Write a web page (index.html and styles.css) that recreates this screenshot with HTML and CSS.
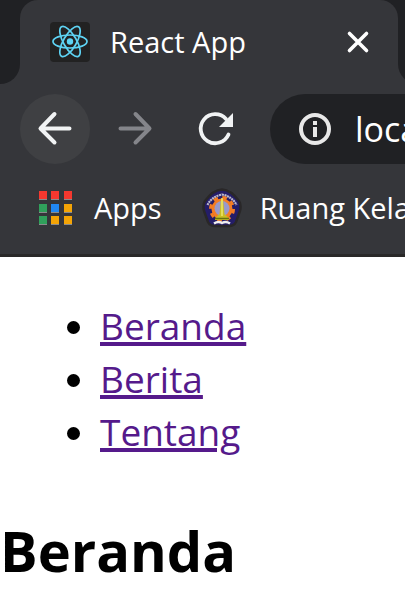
FILE: index.html
```html
<!DOCTYPE html>
<html lang="id">
<head>
<meta charset="utf-8">
<title>React App</title>
<link rel="stylesheet" href="styles.css">
</head>
<body>
<header class="browser">
  <div class="tab-strip">
    <div class="strip-start"></div>
    <div class="tab-slot">
      <div class="tab">
        <svg class="favicon" viewBox="0 0 40 40" aria-hidden="true">
          <rect width="40" height="40" rx="4" fill="#222"/>
          <g fill="none" stroke="#5ed3f3" stroke-width="1.700">
            <ellipse cx="20" cy="19.500" rx="17" ry="6.500"/>
            <ellipse cx="20" cy="19.500" rx="17" ry="6.500" transform="rotate(60 20 19.500)"/>
            <ellipse cx="20" cy="19.500" rx="17" ry="6.500" transform="rotate(120 20 19.500)"/>
          </g>
          <circle cx="20" cy="19.500" r="3.200" fill="#5ed3f3"/>
        </svg>
        <span class="tab-title">React App</span>
        <button class="tab-close" aria-label="Close tab">
          <svg viewBox="0 0 24 24"><path d="M3.500 3.500 20.500 20.500M20.500 3.500 3.500 20.500" fill="none" stroke="#fff" stroke-width="3.600" stroke-linecap="round"/></svg>
        </button>
      </div>
    </div>
    <div class="strip-end"></div>
  </div>
  <div class="toolbar">
    <button class="nav-button active" aria-label="Back">
      <svg viewBox="0 0 40 40"><path d="M34.500 19.500H6M19.500 5 5.500 19.500 19.500 33.500" fill="none" stroke="#f1f3f4" stroke-width="4" stroke-linecap="round" stroke-linejoin="round"/></svg>
    </button>
    <button class="nav-button" aria-label="Forward" disabled>
      <svg viewBox="0 0 40 40"><path d="M5.500 19.500H34M20.500 5 34.500 19.500 20.500 33.500" fill="none" stroke="#84858a" stroke-width="4" stroke-linecap="round" stroke-linejoin="round"/></svg>
    </button>
    <button class="nav-button" aria-label="Reload">
      <svg viewBox="0 0 40 40"><path d="M33.500 25.500A14.500 14.500 0 1 1 31 10" fill="none" stroke="#f1f3f4" stroke-width="3.800" stroke-linecap="round"/><path d="M38 4V18H24Z" fill="#f1f3f4"/></svg>
    </button>
    <label class="address">
      <svg class="info" viewBox="0 0 32 32" aria-hidden="true"><circle cx="16" cy="16" r="14" fill="none" stroke="#e8e8e8" stroke-width="4"/><path d="M14 8h4v4h-4zM14 14h4v10h-4z" fill="#e8e8e8"/></svg>
      <input class="address-input" type="text" value="localhost:3000" aria-label="Address">
    </label>
  </div>
  <nav class="bookmarks">
    <a class="bookmark" href="#apps">
      <svg class="apps-icon" viewBox="0 0 34 34" aria-hidden="true">
        <path d="M1 0h8v9H1zM13 0h8v9h-8zM26 0h8v9h-8zM1 13h8v9H1zM13 13h8v9h-8zM26 13h8v9h-8zM1 25h8v9H1zM13 25h8v9h-8zM26 25h8v9h-8z" fill="#8a8b8d"/>
        <path d="M1 0h8v8H1zM13 0h8v8h-8zM26 0h8v8h-8z" fill="#f5382f"/>
        <path d="M1 13h8v8H1zM1 25h8v8H1z" fill="#30a05b"/>
        <path d="M13 13h8v8h-8z" fill="#2188f3"/>
        <path d="M26 13h8v8h-8zM13 25h8v8h-8zM26 25h8v8h-8z" fill="#f4a406"/>
      </svg>
      <span>Apps</span>
    </a>
    <a class="bookmark" href="#ruang-kelas">
      <svg class="crest" viewBox="0 0 40 40" aria-hidden="true">
        <path d="M20 1.500Q29 2 37 13Q39.500 17 38 23L34 34Q32 38 27 38H13Q8 38 6 34L2 23Q.5 17 3 13Q11 2 20 1.500Z" fill="#241d68" stroke="#292728" stroke-width="2.500"/>
        <path d="M5.500 17Q9 9 20 6.500Q31 9 34.500 17" fill="none" stroke="#bcb9cc" stroke-width="2.200" stroke-dasharray="2 .6"/>
        <circle cx="20" cy="21" r="10.500" fill="#f47d24"/>
        <circle cx="20" cy="21" r="11.500" fill="none" stroke="#f47d24" stroke-width="3" stroke-dasharray="4.500 4.530"/>
        <circle cx="20" cy="20.500" r="7.500" fill="#9999ca"/>
        <path d="M19 11h2L22.500 26l4.500 4v2H13v-2l4.500-4Z" fill="#c9bd25"/>
        <path d="M20 10v18" stroke="#eee96a" stroke-width="1.500"/>
        <path d="M13 30.500h14" stroke="#65720f" stroke-width="1.500"/>
        <path d="M12 35.500Q16 33 20 35Q24 33 28 35.500" fill="none" stroke="#eee" stroke-width="2.500"/>
      </svg>
      <span>Ruang Kelas</span>
    </a>
  </nav>
</header>
<main class="page">
  <ul class="menu">
    <li><a href="#beranda">Beranda</a></li>
    <li><a href="#berita">Berita</a></li>
    <li><a href="#tentang">Tentang</a></li>
  </ul>
  <h1>Beranda</h1>
</main>
</body>
</html>
```
FILE: styles.css
```css
* {
  box-sizing: border-box;
}

body {
  margin: 0;
  background: #fff;
  color: #000;
  font-family: "Segoe UI", "Open Sans", "Noto Sans", sans-serif;
  overflow-x: hidden;
}

svg {
  display: block;
  flex: none;
}

button {
  border: 0;
  padding: 0;
  background: none;
}

.browser {
  background: #35363a;
  border-bottom: 3px solid #292828;
  color: #fff;
  font-size: 29px;
  overflow: hidden;
}

.tab-strip {
  display: flex;
  height: 84px;
}

.strip-start {
  flex: none;
  width: 20px;
  background: #202124;
  border-bottom-right-radius: 20px;
}

.tab-slot {
  flex: none;
  width: 378px;
  background: linear-gradient(#202124 24px, #35363a 24px);
}

.tab {
  display: flex;
  align-items: center;
  height: 100%;
  padding: 0 28px 0 30px;
  background: #35363a;
  border-radius: 18px 18px 0 0;
}

.favicon {
  width: 40px;
  height: 40px;
  margin-right: 20px;
}

.tab-title {
  flex: 1;
  line-height: 40px;
}

.tab-close svg {
  width: 24px;
  height: 24px;
}

.strip-end {
  flex: 1 0 40px;
  background: #202124;
  border-bottom-left-radius: 20px;
}

.toolbar {
  display: flex;
  align-items: center;
  gap: 10px;
  padding: 10px 0 10px 20px;
}

.nav-button {
  display: flex;
  flex: none;
  align-items: center;
  justify-content: center;
  width: 70px;
  height: 70px;
  border-radius: 50%;
}

.nav-button.active {
  background: #3f4043;
}

.nav-button svg {
  width: 40px;
  height: 40px;
}

.address {
  display: flex;
  flex: 1 0 320px;
  align-items: center;
  gap: 24px;
  height: 70px;
  margin-left: 10px;
  padding-left: 29px;
  border-radius: 35px;
  background: #202124;
}

.info {
  width: 32px;
  height: 32px;
}

.address-input {
  flex: 1;
  min-width: 0;
  padding: 0;
  border: 0;
  outline: 0;
  background: none;
  color: #fff;
  font: inherit;
  font-size: 34px;
}

.bookmarks {
  display: flex;
  gap: 40px;
  height: 80px;
  padding: 14px 0 0 38px;
  white-space: nowrap;
}

.bookmark {
  display: flex;
  align-items: center;
  gap: 22px;
  height: 40px;
  color: #fff;
  font-size: 29px;
  line-height: 40px;
  text-decoration: none;
}

.bookmark + .bookmark {
  gap: 18px;
}

.apps-icon {
  width: 34px;
  height: 34px;
}

.crest {
  width: 40px;
  height: 40px;
}

.page {
  padding-top: 42px;
}

.menu {
  margin: 0;
  padding-left: 100px;
  font-size: 37px;
  line-height: 53px;
}

.menu a {
  color: #551a8b;
  text-decoration-thickness: 4px;
  text-underline-offset: 2px;
}

h1 {
  margin: 52px 0 0;
  font-size: 56px;
  font-weight: 700;
  line-height: 80px;
}
```
